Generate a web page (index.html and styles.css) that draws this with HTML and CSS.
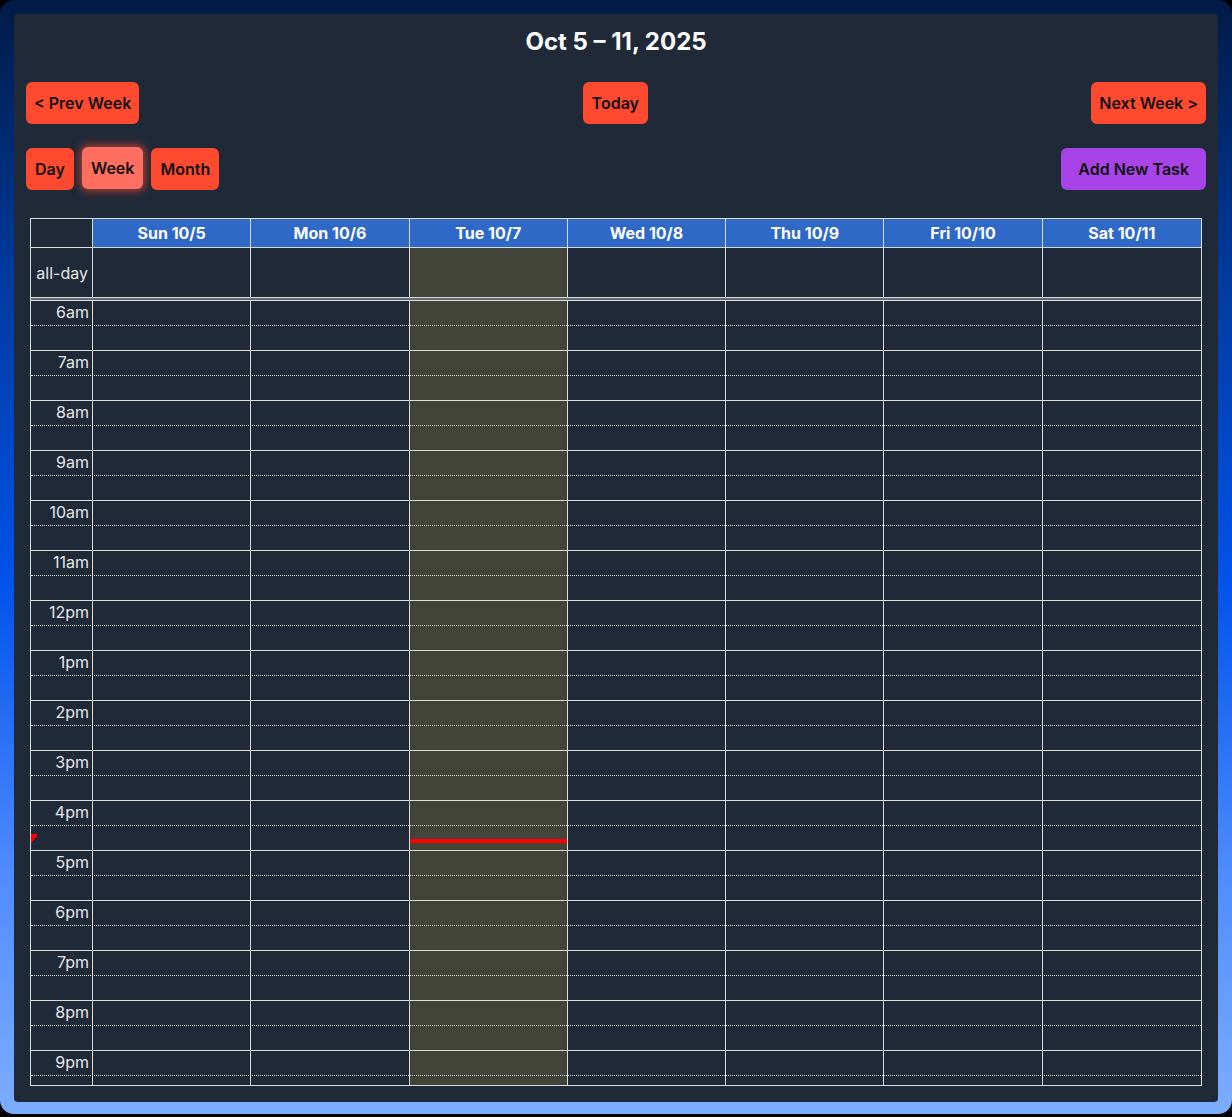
FILE: index.html
```html
<!DOCTYPE html>
<html lang="en">
<head>
<meta charset="utf-8">
<title>Week calendar</title>
<link rel="stylesheet" href="styles.css">
</head>
<body>
<div class="frame">
  <div class="card">
    <h2 class="title">Oct 5 – 11, 2025</h2>
    <div class="toolbar">
      <button class="btn nav">&lt; Prev Week</button>
      <button class="btn">Today</button>
      <button class="btn nav">Next Week &gt;</button>
    </div>
    <div class="toolbar second">
      <div class="group">
        <button class="btn">Day</button>
        <button class="btn active">Week</button>
        <button class="btn">Month</button>
      </div>
      <button class="btn add">Add New Task</button>
    </div>

    <div class="cal">
      <div class="cal-head">
        <div class="hcell axis"></div>
        <div class="hcell">Sun 10/5</div>
        <div class="hcell">Mon 10/6</div>
        <div class="hcell">Tue 10/7</div>
        <div class="hcell">Wed 10/8</div>
        <div class="hcell">Thu 10/9</div>
        <div class="hcell">Fri 10/10</div>
        <div class="hcell">Sat 10/11</div>
      </div>
      <div class="cal-allday">
        <div class="acell axis-label">all-day</div>
        <div class="acell"></div>
        <div class="acell"></div>
        <div class="acell today"></div>
        <div class="acell"></div>
        <div class="acell"></div>
        <div class="acell"></div>
        <div class="acell"></div>
      </div>
      <div class="cal-divider"></div>
      <div class="cal-body">
        <div class="cols">
          <div class="col axis-col"><span class="now-arrow"></span></div>
          <div class="col"></div>
          <div class="col"></div>
          <div class="col today"><span class="now-line"></span></div>
          <div class="col"></div>
          <div class="col"></div>
          <div class="col"></div>
          <div class="col"></div>
        </div>
        <div class="slot"><span class="tlabel">6am</span></div>
        <div class="slot half"></div>
        <div class="slot"><span class="tlabel">7am</span></div>
        <div class="slot half"></div>
        <div class="slot"><span class="tlabel">8am</span></div>
        <div class="slot half"></div>
        <div class="slot"><span class="tlabel">9am</span></div>
        <div class="slot half"></div>
        <div class="slot"><span class="tlabel">10am</span></div>
        <div class="slot half"></div>
        <div class="slot"><span class="tlabel">11am</span></div>
        <div class="slot half"></div>
        <div class="slot"><span class="tlabel">12pm</span></div>
        <div class="slot half"></div>
        <div class="slot"><span class="tlabel">1pm</span></div>
        <div class="slot half"></div>
        <div class="slot"><span class="tlabel">2pm</span></div>
        <div class="slot half"></div>
        <div class="slot"><span class="tlabel">3pm</span></div>
        <div class="slot half"></div>
        <div class="slot"><span class="tlabel">4pm</span></div>
        <div class="slot half"></div>
        <div class="slot"><span class="tlabel">5pm</span></div>
        <div class="slot half"></div>
        <div class="slot"><span class="tlabel">6pm</span></div>
        <div class="slot half"></div>
        <div class="slot"><span class="tlabel">7pm</span></div>
        <div class="slot half"></div>
        <div class="slot"><span class="tlabel">8pm</span></div>
        <div class="slot half"></div>
        <div class="slot"><span class="tlabel">9pm</span></div>
        <div class="slot half"></div>
        <div class="slot"><span class="tlabel">10pm</span></div>
        <div class="slot half"></div>
      </div>
    </div>
  </div>
</div>
</body>
</html>
```

FILE: styles.css
```css
* { box-sizing: border-box; }

html, body {
  margin: 0;
  background: #000;
  font-family: Inter, "Noto Sans", "Liberation Sans", sans-serif;
}

.frame {
  height: 1114px;
  border-radius: 14px;
  padding: 14px;
  background: linear-gradient(180deg, #001a45 0%, #003a9e 25%, #0052e8 52%, #4d8bff 78%, #7cadff 100%);
}

.card {
  height: 1088px;
  background: #1f2937;
  border-radius: 4px;
  padding: 12px;
  display: flex;
  flex-direction: column;
}

.title {
  margin: 1px 0 0;
  height: 30px;
  line-height: 30px;
  text-align: center;
  color: #fff;
  font-size: 24px;
  font-weight: 700;
}

.toolbar {
  display: flex;
  justify-content: space-between;
  align-items: center;
  margin-top: 25px;
}

.toolbar.second { margin-top: 24px; }

.group {
  display: flex;
  gap: 8px;
}

.btn {
  height: 42px;
  padding: 0 9px;
  border: 0;
  border-radius: 6px;
  background: #ff4a2f;
  color: #111;
  font-family: Inter, "Noto Sans", sans-serif;
  font-size: 16px;
  font-weight: 600;
  cursor: pointer;
}

.btn.nav { padding: 0 8px; }

.btn.active {
  background: #ff6e5f;
  box-shadow: 0 0 9px 2px rgba(255, 74, 47, 0.65);
  transform: translateY(-1px);
}

.btn.add {
  background: #a843e7;
  padding: 0 17px;
}

.cal {
  margin: 28px 4px 0;
  height: 868px;
  border: 1px solid #ddd;
  display: flex;
  flex-direction: column;
  color: #fff;
}

.cal-head,
.cal-allday,
.cols {
  display: grid;
  grid-template-columns: 62px repeat(7, 1fr);
}

.cal-head {
  height: 29px;
  border-bottom: 1px solid #ddd;
}

.hcell {
  background: #2f69c8;
  border-right: 1px solid #ddd;
  display: flex;
  align-items: center;
  justify-content: center;
  font-size: 16px;
  font-weight: 700;
}

.hcell.axis { background: transparent; }
.hcell:last-child,
.acell:last-child,
.col:last-child { border-right: 0; }

.cal-allday {
  height: 50px;
  border-bottom: 1px solid #ddd;
}

.acell {
  border-right: 1px solid #ddd;
}

.axis-label {
  display: flex;
  align-items: center;
  justify-content: flex-end;
  padding-right: 4px;
  font-size: 16px;
  color: #e5e7eb;
}

.today { background: #42443a; }

.cal-divider {
  height: 3px;
  background: #666a72;
  border-bottom: 1px solid #ddd;
}

.cal-body {
  position: relative;
  flex: 1;
  overflow: hidden;
  isolation: isolate;
}

.cols {
  position: absolute;
  inset: 0;
  z-index: -1;
}

.col {
  position: relative;
  border-right: 1px solid #ddd;
}

.slot {
  height: 25px;
  border-bottom: 1px dotted #ddd;
}

.slot.half { border-bottom-style: solid; }

.tlabel {
  display: block;
  width: 62px;
  padding: 1px 4px 0 0;
  text-align: right;
  font-size: 16px;
  line-height: 21px;
  color: #e5e7eb;
}

.now-line {
  position: absolute;
  left: 0;
  right: 0;
  top: 538px;
  height: 4px;
  background: #ff0000;
}

.now-arrow {
  position: absolute;
  left: 0;
  top: 533px;
  width: 6px;
  height: 9px;
  background: #ff0000;
  clip-path: polygon(0 0, 100% 0, 100% 25%, 0 100%);
}
```
